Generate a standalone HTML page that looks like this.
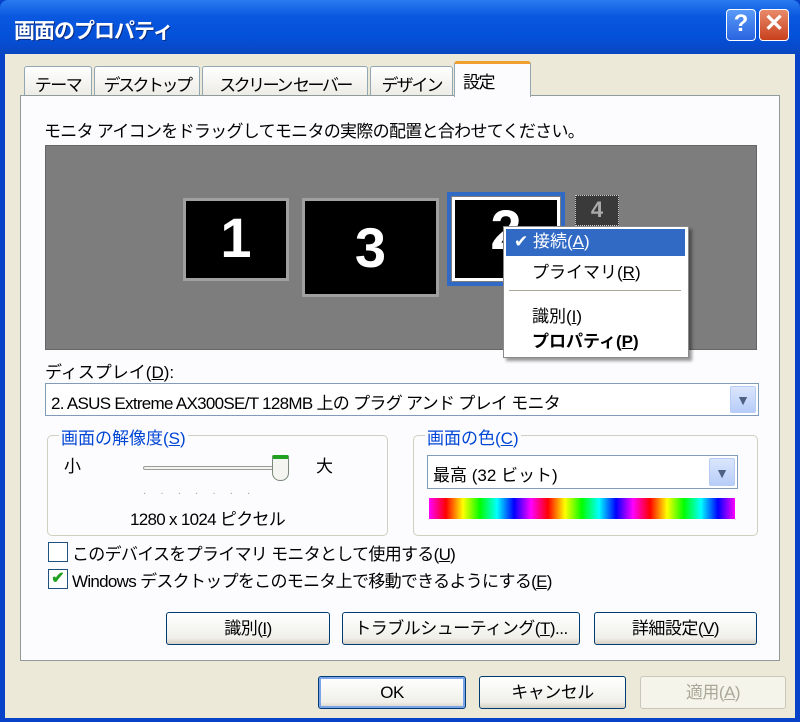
<!DOCTYPE html>
<html><head><meta charset="utf-8"><style>
*{margin:0;padding:0;box-sizing:border-box}
body{width:800px;height:722px;overflow:hidden;background:#0842c8;font-family:"Liberation Sans","Noto Sans CJK JP",sans-serif;font-size:17px;color:#000;position:relative}
.a{position:absolute;white-space:nowrap}
.title{left:0;top:0;width:800px;height:54px;background:linear-gradient(#2a7bf0,#0a58e0 30%,#0450d8 70%,#0a46c0);border-radius:8px 8px 0 0}
.tt{left:14px;top:15px;color:#fff;font-weight:bold;font-size:21px;letter-spacing:-1px;text-shadow:1px 1px #0a2a80}
.tb{top:9px;width:30px;height:32px;border:1px solid #fff;border-radius:4px;color:#fff;font-size:24px;text-align:center;line-height:28px;font-weight:bold}
.body{left:5px;top:54px;width:790px;height:664px;background:#ece9d8}
.tab{top:66px;height:30px;background:linear-gradient(#fff,#ecebe5);border:1px solid #91a7b4;border-bottom:none;border-radius:3px 3px 0 0;padding:4px 0 0;font-size:17px;letter-spacing:-1.5px;text-align:center;overflow:hidden}
.panel{left:20px;top:95px;width:760px;height:566px;background:#fcfcfe;border:1px solid #919b9c}
.btn{height:33px;border:1px solid #003c74;border-radius:3px;background:linear-gradient(#fff,#f0f0ea 80%,#d6d0c5);text-align:center;line-height:31px;font-size:17px;letter-spacing:-0.5px}
.mon{background:#000;border:3px solid #a0a0a0;color:#fff;font-weight:bold;font-size:56px;text-align:center}
.grp{border:1px solid #d0d0bf;border-radius:5px}
.gl{color:#0046d5;background:#fcfcfe;padding:0 2px;font-size:17px}
.cb{width:20px;height:20px;border:1px solid #1c5180;background:#fff}
.combo{background:#fff;border:1px solid #7f9db9}
.dd{background:linear-gradient(#dbe6fd,#b7cdf8);border:1px solid #b7cdf8;border-radius:2px;color:#4d6185;text-align:center;font-size:14px}
.c{letter-spacing:-0.7px}
</style></head><body>
<div class="a title"></div>
<div class="a tt">画面のプロパティ</div>
<div class="a tb" style="left:726px;background:linear-gradient(#5a9af8,#2a64e0)">?</div>
<div class="a tb" style="left:759px;background:linear-gradient(#e88a6a,#c8401c)">✕</div>
<div class="a body"></div>
<div class="a tab" style="left:24px;width:68px">テーマ</div>
<div class="a tab" style="left:94px;width:106px;letter-spacing:-2.5px">デスクトップ</div>
<div class="a tab" style="left:202px;width:166px;letter-spacing:-2.5px">スクリーン セーバー</div>
<div class="a tab" style="left:370px;width:83px;letter-spacing:-2px">デザイン</div>
<div class="a panel"></div>
<div class="a tab" style="left:454px;top:61px;width:77px;height:36px;background:#fcfcfe;border-top:3px solid #f0a030;z-index:2;text-align:left;padding-left:8px">設定</div>
<div class="a c" style="left:44px;top:117px">モニタ アイコンをドラッグしてモニタの実際の配置と合わせてください。</div>
<div class="a" style="left:45px;top:145px;width:712px;height:205px;background:#7d7d7d;border:1px solid #666"></div>
<div class="a mon" style="left:183px;top:198px;width:106px;height:83px;line-height:74px">1</div>
<div class="a mon" style="left:302px;top:198px;width:137px;height:99px;line-height:94px">3</div>
<div class="a" style="left:447px;top:192px;width:118px;height:94px;border:4px solid #316ac5"></div>
<div class="a mon" style="left:452px;top:197px;width:108px;height:84px;line-height:60px;border-color:#fff">2</div>
<div class="a" style="left:575px;top:195px;width:44px;height:31px;background:#3a3a3a;border:1px dotted #ccc;color:#aaa;font-weight:bold;font-size:22px;text-align:center;line-height:28px">4</div>
<div class="a" style="left:503px;top:226px;width:186px;height:132px;background:#fff;border:1px solid #8a8a8a;box-shadow:3px 3px 3px rgba(0,0,0,.4)"></div>
<div class="a" style="left:506px;top:229px;width:179px;height:27px;background:#316ac5;color:#fff;padding-left:8px;line-height:26px">✔ 接続(<u>A</u>)</div>
<div class="a" style="left:532px;top:258px">プライマリ(<u>R</u>)</div>
<div class="a" style="left:509px;top:290px;width:172px;height:2px;border-top:1px solid #aca899;border-bottom:1px solid #fff"></div>
<div class="a" style="left:532px;top:302px">識別(<u>I</u>)</div>
<div class="a" style="left:532px;top:327px;font-weight:bold">プロパティ(<u>P</u>)</div>
<div class="a" style="left:45px;top:358px">ディスプレイ(<u>D</u>):</div>
<div class="a combo" style="left:45px;top:383px;width:714px;height:33px"></div>
<div class="a c" style="left:51px;top:389px">2. ASUS Extreme AX300SE/T 128MB 上の プラグ アンド プレイ モニタ</div>
<div class="a dd" style="left:730px;top:386px;width:26px;height:27px;line-height:27px">▼</div>
<div class="a grp" style="left:47px;top:435px;width:341px;height:101px"></div>
<div class="a gl" style="left:59px;top:424px">画面の解像度(<u>S</u>)</div>
<div class="a" style="left:64px;top:452px">小</div>
<div class="a" style="left:316px;top:452px">大</div>
<div class="a" style="left:143px;top:466px;width:138px;height:4px;border:1px solid #9d9c99;border-radius:2px;background:#f3f3ef"></div>
<div class="a" style="left:272px;top:455px;width:17px;height:26px;background:#f4f4f0;border:1px solid #7a8a7a;border-top:4px solid #21a121;border-radius:2px 2px 8px 8px"></div>
<div class="a" style="left:143px;top:488px;width:140px;letter-spacing:14px;color:#999;font-size:10px">·······</div>
<div class="a c" style="left:130px;top:505px">1280 x 1024 ピクセル</div>
<div class="a grp" style="left:413px;top:435px;width:345px;height:101px"></div>
<div class="a gl" style="left:425px;top:424px">画面の色(<u>C</u>)</div>
<div class="a combo" style="left:427px;top:455px;width:311px;height:34px"></div>
<div class="a" style="left:433px;top:461px">最高 (32 ビット)</div>
<div class="a dd" style="left:709px;top:458px;width:26px;height:28px;line-height:28px">▼</div>
<div class="a" style="left:429px;top:498px;width:306px;height:21px;background:linear-gradient(90deg,#f0f,#f00,#ff0,#0f0,#0ff,#00f,#f0f,#f00,#ff0,#0f0,#0ff,#00f,#f0f,#f00,#ff0,#0f0,#0ff,#00f,#f0f)"></div>
<div class="a cb" style="left:48px;top:542px"></div>
<div class="a c" style="left:72px;top:540px">このデバイスをプライマリ モニタとして使用する(<u>U</u>)</div>
<div class="a cb" style="left:48px;top:569px;color:#21a121;font-size:16px;text-align:center;line-height:18px;font-weight:bold">✔</div>
<div class="a c" style="left:72px;top:567px">Windows デスクトップをこのモニタ上で移動できるようにする(<u>E</u>)</div>
<div class="a btn" style="left:166px;top:612px;width:164px">識別(<u>I</u>)</div>
<div class="a btn" style="left:342px;top:612px;width:238px">トラブルシューティング(<u>T</u>)...</div>
<div class="a btn" style="left:594px;top:612px;width:163px">詳細設定(<u>V</u>)</div>
<div class="a btn" style="left:318px;top:676px;width:148px;box-shadow:inset 0 0 0 2px #7ca4e8">OK</div>
<div class="a btn" style="left:479px;top:676px;width:147px">キャンセル</div>
<div class="a btn" style="left:640px;top:676px;width:146px;border-color:#c9c7ba;background:#f5f4ea;color:#aca899">適用(<u>A</u>)</div>
</body></html>
